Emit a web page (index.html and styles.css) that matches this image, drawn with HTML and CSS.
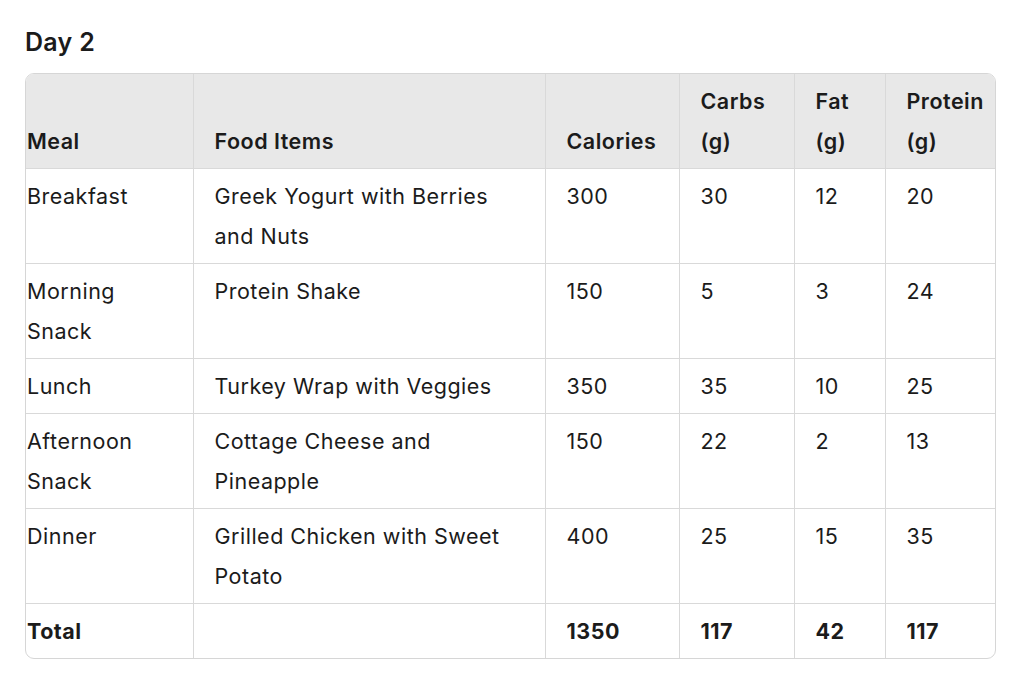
FILE: index.html
```html
<!DOCTYPE html>
<html>
<head>
<meta charset="utf-8">
<link rel="stylesheet" href="styles.css">
</head>
<body>
<div class="page">
  <h3 class="title">Day 2</h3>
  <div class="table-wrap">
    <table class="meals">
      <colgroup>
        <col class="c-meal"><col class="c-food"><col class="c-cal"><col class="c-carb"><col class="c-fat"><col class="c-prot">
      </colgroup>
      <thead>
        <tr><th>Meal</th><th>Food Items</th><th>Calories</th><th>Carbs (g)</th><th>Fat (g)</th><th>Protein (g)</th></tr>
      </thead>
      <tbody>
        <tr><td>Breakfast</td><td>Greek Yogurt with Berries and Nuts</td><td>300</td><td>30</td><td>12</td><td>20</td></tr>
        <tr><td>Morning Snack</td><td>Protein Shake</td><td>150</td><td>5</td><td>3</td><td>24</td></tr>
        <tr><td>Lunch</td><td>Turkey Wrap with Veggies</td><td>350</td><td>35</td><td>10</td><td>25</td></tr>
        <tr><td>Afternoon Snack</td><td>Cottage Cheese and Pineapple</td><td>150</td><td>22</td><td>2</td><td>13</td></tr>
        <tr><td>Dinner</td><td>Grilled Chicken with Sweet Potato</td><td>400</td><td>25</td><td>15</td><td>35</td></tr>
        <tr class="total"><td>Total</td><td></td><td>1350</td><td>117</td><td>42</td><td>117</td></tr>
      </tbody>
    </table>
  </div>
</div>
</body>
</html>
```
FILE: styles.css
```css
html, body {
  margin: 0;
  padding: 0;
  background: #ffffff;
}
body {
  font-family: "Inter", "Liberation Sans", sans-serif;
  color: #1b1b1b;
}
.page {
  padding: 26px 28px 0 25px;
}
.title {
  margin: 0 0 15px 0;
  font-size: 25px;
  line-height: 32px;
  font-weight: 600;
  letter-spacing: 0.3px;
}
.table-wrap {
  width: 969px;
  border: 1px solid #d6d6d6;
  border-radius: 9px;
  overflow: hidden;
}
.meals {
  width: 100%;
  border-collapse: collapse;
  table-layout: fixed;
  font-size: 21.5px;
  line-height: 40px;
  letter-spacing: 0.5px;
}
.c-meal { width: 167px; }
.c-food { width: 352px; }
.c-cal { width: 134px; }
.c-carb { width: 115px; }
.c-fat { width: 91px; }
.c-prot { width: 110px; }
.meals th, .meals td {
  text-align: left;
  vertical-align: top;
  padding: 7px 18px 7px 21px;
  border: 1px solid #d9d9d9;
}
.meals thead th {
  vertical-align: bottom;
  background: #e8e8e8;
  font-weight: 600;
}
.meals th:first-child, .meals td:first-child {
  padding-left: 1px;
  border-left: none;
}
.meals th:last-child, .meals td:last-child {
  border-right: none;
  padding-right: 4px;
}
.meals thead tr th {
  border-top: none;
}
.meals tbody tr:last-child td {
  border-bottom: none;
}
.meals .total td {
  font-weight: 700;
}
```
